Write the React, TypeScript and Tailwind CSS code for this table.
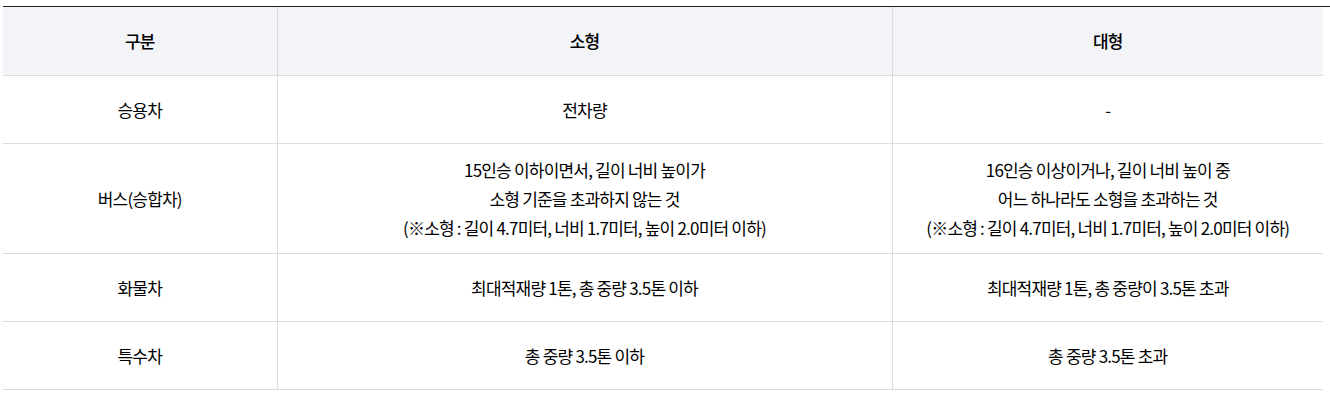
const rows: { name: string; small: string[]; large: string[] }[] = [
	{ name: "승용차", small: ["전차량"], large: ["-"] },
	{
		name: "버스(승합차)",
		small: [
			"15인승 이하이면서, 길이 너비 높이가",
			"소형 기준을 초과하지 않는 것",
			"(※소형 : 길이 4.7미터, 너비 1.7미터, 높이 2.0미터 이하)",
		],
		large: [
			"16인승 이상이거나, 길이 너비 높이 중",
			"어느 하나라도 소형을 초과하는 것",
			"(※소형 : 길이 4.7미터, 너비 1.7미터, 높이 2.0미터 이하)",
		],
	},
	{ name: "화물차", small: ["최대적재량 1톤, 총 중량 3.5톤 이하"], large: ["최대적재량 1톤, 총 중량이 3.5톤 초과"] },
	{ name: "특수차", small: ["총 중량 3.5톤 이하"], large: ["총 중량 3.5톤 초과"] },
];

function Lines({ lines }: { lines: string[] }) {
	return (
		<>
			{lines.map((l, i) => (
				<div key={i}>{l}</div>
			))}
		</>
	);
}

export default function App() {
	return (
		<div className="bg-white w-[1330px] h-[400px] pt-[6px] pl-[3px] font-['Noto_Sans_CJK_KR',sans-serif] text-[17px] text-[#000] tracking-[-0.8px]">
			<div className="border-t border-[#222]">
				<table className="w-[1320px] table-fixed border-collapse text-center">
					<colgroup>
						<col className="w-[274px]" />
						<col className="w-[615px]" />
						<col className="w-[431px]" />
					</colgroup>
					<thead>
						<tr className="bg-[#f3f4f8] h-[68px] border-b border-[#dcdde0]">
							<th className="border-r border-[#dcdde0] font-medium">구분</th>
							<th className="border-r border-[#dcdde0] font-medium">소형</th>
							<th className="font-medium">대형</th>
						</tr>
					</thead>
					<tbody>
						{rows.map((r) => (
							<tr key={r.name} className="h-[68px] border-b border-[#dcdde0] leading-[29px]">
								<td className="border-r border-[#dcdde0] py-[11px]">{r.name}</td>
								<td className="border-r border-[#dcdde0] py-[11px]">
									<Lines lines={r.small} />
								</td>
								<td className="py-[11px]">
									<Lines lines={r.large} />
								</td>
							</tr>
						))}
					</tbody>
				</table>
			</div>
		</div>
	);
}
